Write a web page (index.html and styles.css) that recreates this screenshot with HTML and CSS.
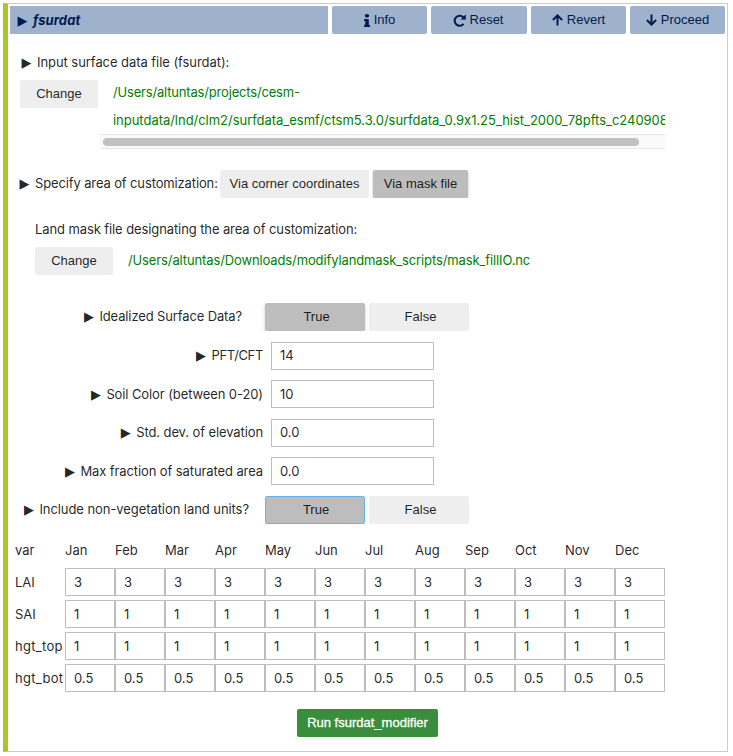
FILE: index.html
```html
<!DOCTYPE html>
<html lang="en">
<head>
<meta charset="utf-8">
<title>fsurdat</title>
<link rel="stylesheet" href="styles.css">
</head>
<body>
<main class="panel">
  <header class="header">
    <h1 class="title"><span class="marker">►</span>fsurdat</h1>
    <button class="action"><svg width="6" height="13" viewBox="0 0 192 512" preserveAspectRatio="none"><path d="M20 424.2h20V279.8H20c-11 0-20-9-20-20V212c0-11 9-20 20-20h112c11 0 20 9 20 20v212.200h20c11 0 20 9 20 20V492c0 11-9 20-20 20H20c-11 0-20-9-20-20v-47.800c0-11 9-20 20-20zM96 0a72 72 0 1 0 0 144A72 72 0 1 0 96 0z"/></svg><span>Info</span></button>
    <button class="action reset"><svg width="13" height="13" viewBox="0 0 13 13"><path class="stroke" d="M10.400 3.400A5 5 0 1 0 10.600 9.800"/><path d="M12.800.3v5.300H7.500z"/></svg><span>Reset</span></button>
    <button class="action"><svg width="11" height="12" viewBox="0 0 11 12"><path class="stroke" d="M5.500 11.500V1.500M.9 6l4.600-4.600L10.100 6"/></svg><span>Revert</span></button>
    <button class="action"><svg width="11" height="12" viewBox="0 0 11 12"><path class="stroke" d="M5.500.5v10M.9 6l4.600 4.600L10.100 6"/></svg><span>Proceed</span></button>
  </header>

  <section class="source">
    <div class="label source-label"><span class="marker">►</span>Input surface data file (fsurdat):</div>
    <div class="file-row">
      <button class="btn change">Change</button>
      <div class="scroller">
        <div class="path"><span class="dir">/Users/altuntas/projects/cesm-</span><br>inputdata/lnd/clm2/surfdata_esmf/ctsm5.3.0/surfdata_0.9x1.25_hist_2000_78pfts_c240908</div>
        <div class="track"><div class="thumb"></div></div>
      </div>
    </div>
  </section>

  <section class="area-row">
    <div class="label area-label"><span class="marker">►</span>Specify area of customization:</div>
    <button class="btn corner">Via corner coordinates</button>
    <div class="clip"><button class="btn mask on">Via mask file</button></div>
  </section>

  <section class="landmask">
    <div class="label mask-label">Land mask file designating the area of customization:</div>
    <div class="file-row">
      <button class="btn change">Change</button>
      <div class="path">/Users/altuntas/Downloads/modifylandmask_scripts/mask_fillIO.nc</div>
    </div>
  </section>

  <section class="form">
    <div class="field toggle"><div class="label ideal"><span class="marker">►</span>Idealized Surface Data?</div><div class="clip"><button class="btn on">True</button><button class="btn">False</button></div></div>
    <div class="field"><div class="label pft"><span class="marker">►</span>PFT/CFT</div><div class="input">14</div></div>
    <div class="field"><div class="label soil"><span class="marker">►</span>Soil Color (between 0-20)</div><div class="input">10</div></div>
    <div class="field"><div class="label std"><span class="marker">►</span>Std. dev. of elevation</div><div class="input">0.0</div></div>
    <div class="field"><div class="label sat"><span class="marker">►</span>Max fraction of saturated area</div><div class="input">0.0</div></div>
    <div class="field toggle"><div class="label units"><span class="marker">►</span>Include non-vegetation land units?</div><div class="clip"><button class="btn on focus">True</button><button class="btn">False</button></div></div>
  </section>

  <section class="months">
    <div class="row head"><span>var</span><span>Jan</span><span>Feb</span><span>Mar</span><span>Apr</span><span>May</span><span>Jun</span><span>Jul</span><span>Aug</span><span>Sep</span><span>Oct</span><span>Nov</span><span>Dec</span></div>
    <div class="row"><span>LAI</span><div class="input">3</div><div class="input">3</div><div class="input">3</div><div class="input">3</div><div class="input">3</div><div class="input">3</div><div class="input">3</div><div class="input">3</div><div class="input">3</div><div class="input">3</div><div class="input">3</div><div class="input">3</div></div>
    <div class="row"><span>SAI</span><div class="input">1</div><div class="input">1</div><div class="input">1</div><div class="input">1</div><div class="input">1</div><div class="input">1</div><div class="input">1</div><div class="input">1</div><div class="input">1</div><div class="input">1</div><div class="input">1</div><div class="input">1</div></div>
    <div class="row"><span class="hgt">hgt_top</span><div class="input">1</div><div class="input">1</div><div class="input">1</div><div class="input">1</div><div class="input">1</div><div class="input">1</div><div class="input">1</div><div class="input">1</div><div class="input">1</div><div class="input">1</div><div class="input">1</div><div class="input">1</div></div>
    <div class="row"><span class="hgt">hgt_bot</span><div class="input">0.5</div><div class="input">0.5</div><div class="input">0.5</div><div class="input">0.5</div><div class="input">0.5</div><div class="input">0.5</div><div class="input">0.5</div><div class="input">0.5</div><div class="input">0.5</div><div class="input">0.5</div><div class="input">0.5</div><div class="input">0.5</div></div>
  </section>

  <button class="run">Run fsurdat_modifier</button>
</main>
</body>
</html>
```
FILE: styles.css
```css
* { box-sizing: border-box; }

body {
  margin: 0;
  padding: 3px;
  background: #fff;
  color: rgba(0, 0, 0, 0.87);
  font: 13px/28px Inter, sans-serif;
  font-feature-settings: "calt" 0;
}

.panel {
  width: 725px;
  height: 749px;
  border: 1px solid #ccc;
  border-left: 5px solid #a9c727;
  display: flex;
  flex-direction: column;
}

button {
  font: 13px/28px "Liberation Sans", Arial, sans-serif;
  border: 0;
  padding: 0;
  height: 28px;
  color: rgba(0, 0, 0, 0.87);
  white-space: nowrap;
}

.header {
  display: grid;
  grid-template-columns: 318px 95px 96px 95px 95px;
  column-gap: 4px;
  padding: 2px 0 0 2px;
}

.title {
  margin: 0;
  padding-left: 8px;
  height: 28px;
  background: #9fb2cd;
  color: #001a4d;
  font: italic bold 13px/28px Inter, sans-serif;
  letter-spacing: .1px;
}

.action {
  display: flex;
  align-items: center;
  justify-content: center;
  gap: 4px;
  border-radius: 2px;
  background: #9fb2cd;
  color: #001a4d;
}

.action svg { fill: currentColor; }
.action .stroke { fill: none; stroke: currentColor; stroke-width: 2; }
.reset { padding-right: 2px; }

.marker {
  display: inline-block;
  width: 15px;
  font: normal 13px/20px "DejaVu Sans", sans-serif;
  letter-spacing: 0;
  text-indent: -.5px;
  transform: scaleY(1.6);
  transform-origin: 50% 52%;
}

.label { white-space: nowrap; height: 28px; line-height: 27px; letter-spacing: -.1px; }

.btn { background: #eee; border-radius: 2px; flex: none; }
.btn.on {
  background: #bdbdbd;
  box-shadow: 0 2px 2px rgba(0, 0, 0, .14), 0 3px 1px -2px rgba(0, 0, 0, .2), 0 1px 5px rgba(0, 0, 0, .12);
}
.toggle .btn.focus { box-shadow: none; border: 1px solid #64b5f6; line-height: 26px; padding-left: 2px; }
.change { width: 78px; }

.source { padding: 14px 0 0 12px; }
.source-label { padding-left: 2px; margin-bottom: 4px; line-height: 28px; letter-spacing: -.06px; }
.file-row { display: flex; }
.path {
  color: #008000;
  white-space: nowrap;
  padding-left: 15px;
  margin-top: -1px;
  letter-spacing: -.12px;
}
.scroller { width: 565px; margin-left: 2px; overflow: hidden; }
.scroller .path { padding-left: 13px; height: 56px; margin-top: -2px; letter-spacing: -.03px; }
.scroller .dir { letter-spacing: -.18px; }
.track {
  height: 15px;
  background: #fafafa;
  border: solid #e8e8e8;
  border-width: 1px 0;
  padding: 3px;
}
.thumb { width: 536px; height: 8px; border-radius: 4px; background: #c1c1c1; }

.area-row { display: flex; padding-left: 12px; margin-top: 21px; }
.area-label { width: 200px; letter-spacing: -.13px; }
.corner { width: 149px; margin-right: 2px; }
.clip { display: flex; gap: 4px; height: 28px; overflow: hidden; padding: 0 2px; }
.mask { width: 95px; }

.landmask { padding-left: 27px; margin-top: 18px; }
.mask-label { margin-bottom: 3px; }

.form { display: flex; flex-direction: column; gap: 10.6px; margin-top: 28px; }
.field { display: flex; height: 28px; }
.field .label { width: 255px; text-align: right; }
.label.soil, .label.sat { line-height: 28px; }
.field .marker { text-align: left; }
.field .input { width: 163px; margin-left: 8px; line-height: 25px; }
.field .soil + .input, .field .sat + .input { line-height: 26px; }
.input {
  height: 28px;
  border: 1px solid #bdbdbd;
  padding-left: 8px;
  line-height: 26px;
}
.toggle .btn { width: 100px; padding-left: 3px; }
.toggle .clip { padding-left: 6px; margin-left: -4px; }
.label.ideal { padding-right: 21px; letter-spacing: -.13px; }
.label.units { padding-right: 14px; letter-spacing: -.07px; }
.label.pft { letter-spacing: -.35px; }

.months {
  display: flex;
  flex-direction: column;
  gap: 4px;
  padding-left: 7px;
  margin-top: 12px;
}
.row { display: grid; grid-template-columns: repeat(13, 50px); height: 28px; }
.hgt { letter-spacing: .3px; }

.run {
  width: 141px;
  align-self: flex-start;
  margin: 17px 0 0 289px;
  border-radius: 2px;
  background: #388e3c;
  color: #fff;
  -webkit-text-stroke: .3px #fff;
}
```
